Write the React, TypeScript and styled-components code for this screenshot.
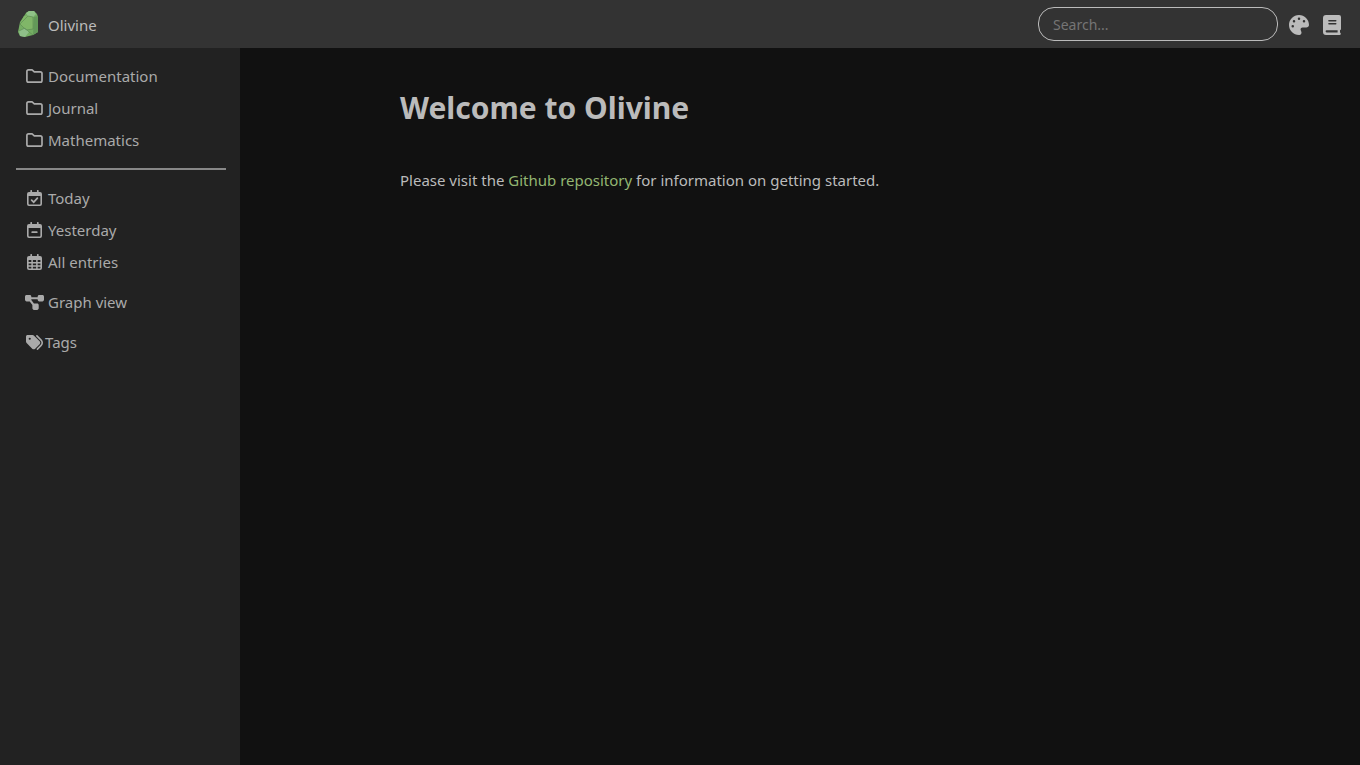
import React from "react";
import styled, { createGlobalStyle } from "styled-components";
import { FaDiagramProject, FaPalette, FaTags } from "react-icons/fa6";

const GlobalStyle = createGlobalStyle`
  *, *::before, *::after { box-sizing: border-box; }
  body {
    margin: 0;
    background: #111111;
    color: #bbbbbb;
    font-family: "Noto Sans", sans-serif;
    font-size: 15px;
    line-height: 24px;
  }
`;

const Page = styled.div`
  display: flex;
  flex-direction: column;
  min-height: 100vh;
`;

const TopBar = styled.header`
  display: flex;
  align-items: center;
  height: 48px;
  padding: 0 16px;
  background: #333333;
`;

const Brand = styled.a`
  display: flex;
  align-items: center;
  gap: 8px;
  margin-right: auto;
  padding-top: 2px;
  color: inherit;
  text-decoration: none;

  svg { margin-bottom: 2px; }
`;

const SearchInput = styled.input`
  width: 240px;
  height: 34px;
  margin-right: 8px;
  padding: 0 14px;
  border: 1px solid #bbbbbb;
  border-radius: 16px;
  background: transparent;
  color: #bbbbbb;
  font: inherit;
  font-size: 14px;

  &::placeholder { color: #757575; opacity: 1; }
`;

const IconButton = styled.button`
  display: flex;
  align-items: center;
  justify-content: center;
  width: 25px;
  height: 32px;
  padding: 2px 0 0;
  border: 0;
  background: none;
  color: #bbbbbb;
  font-size: 20px;
  cursor: pointer;

  & + & { margin-left: 8px; }
`;

const Body = styled.div`
  display: flex;
  flex: 1;
`;

const Sidebar = styled.nav`
  flex: none;
  width: 240px;
  padding: 12px 14px 12px 16px;
  background: #222222;
`;

const LinkList = styled.ul`
  margin: 0;
  padding: 0 0 0 8px;
  list-style: none;

  & + & { margin-top: 8px; }
`;

const SidebarLink = styled.a<{ $gap?: number }>`
  display: flex;
  align-items: center;
  gap: ${({ $gap = 3 }) => $gap}px;
  height: 32px;
  color: #aaaaaa;
  text-decoration: none;
`;

const IconSlot = styled.span`
  display: flex;
  justify-content: center;
  width: 21px;
  font-size: 17px;

  svg { flex: none; }
`;

const Divider = styled.hr`
  height: 2px;
  margin: 12px 0;
  border: 0;
  background: #888888;
`;

const Content = styled.main`
  flex: 1;
  padding: 38px 160px;
`;

const Title = styled.h1`
  margin: 0 0 38px;
  font-size: 30px;
  line-height: 44px;
  font-weight: 700;
`;

const Paragraph = styled.p`
  margin: 0;
`;

const TextLink = styled.a`
  color: #93b672;
  text-decoration: none;
`;

const OlivineLogo = () => (
  <svg width="24" height="28" viewBox="0 0 24 28" aria-hidden="true">
    <path d="M10 3 L13 1 L18 1 L21 4 L22 7 L22 22 L17 25 L9 27 L4 26 L2 22 L4 12 Z" fill="#74ad63" />
    <path d="M18 7 L22 6 L22 22 L17 25 Z" fill="#639959" />
    <path d="M10 3 L13 1 L18 1 L20 4 L17 7 L12 6 Z" fill="#90c287" />
    <path d="M12 6 L17 7 L17 19 L10 20 L4 14 L8 6 Z" fill="#80b668" />
    <path d="M3 21 L9 18 L13 22 L9 27 L4 26 Z" fill="#8fbf89" />
    <path
      d="M12 6 L4 14 L10 20 L17 19 L17 7 Z M9 18 L3 21 M9 18 L13 22 L17 25"
      fill="none"
      stroke="#547f4e"
      strokeWidth="0.5"
    />
  </svg>
);

const BookIcon = () => (
  <svg width="18" height="20" viewBox="0 0 18 20" aria-hidden="true">
    <path
      fillRule="evenodd"
      fill="currentColor"
      d="M3 0 H16 Q18 0 18 2 V14 Q18 15 17 15.3 V17.6 Q17.8 17.8 17.8 18.8 Q17.8 20 16.6 20 H3 Q0 20 0 17 V3 Q0 0 3 0 Z M5.9 5 Q5.2 5 5.2 5.7 Q5.2 6.4 5.9 6.4 H12.8 Q13.5 6.4 13.5 5.7 Q13.5 5 12.8 5 Z M5.9 8 Q5.2 8 5.2 8.7 Q5.2 9.4 5.9 9.4 H12.8 Q13.5 9.4 13.5 8.7 Q13.5 8 12.8 8 Z M3.6 15.2 Q2.6 15.2 2.6 16.3 Q2.6 17.4 3.6 17.4 H14.6 V15.2 Z"
    />
  </svg>
);

const FolderIcon = () => (
  <svg width="17" height="14" viewBox="0 0 17 14" aria-hidden="true">
    <path
      d="M2.5 .9 H6.1 L8.3 2.8 H14.3 Q16 2.8 16 4.5 V11.4 Q16 13.1 14.3 13.1 H2.6 Q.9 13.1 .9 11.4 V2.6 Q.9 .9 2.5 .9 Z"
      fill="none"
      stroke="currentColor"
      strokeWidth="1.7"
      strokeLinejoin="round"
    />
  </svg>
);

const CalendarIcon = ({ mark }: { mark: "check" | "minus" | "grid" }) => (
  <svg width="15" height="16" viewBox="0 0 15 16" aria-hidden="true">
    <path d="M4.2 .8 V3 M10.8 .8 V3" stroke="currentColor" strokeWidth="1.7" strokeLinecap="round" />
    <path
      fillRule="evenodd"
      fill="currentColor"
      d="M2 2 H13 Q15 2 15 4 V14 Q15 16 13 16 H2 Q0 16 0 14 V4 Q0 2 2 2 Z M1.6 6 V13.8 Q1.6 14.4 2.2 14.4 H12.8 Q13.4 14.4 13.4 13.8 V6 Z"
    />
    {mark === "check" && (
      <path d="M4.6 10.2 L6.7 12.2 L10.4 8.2" fill="none" stroke="currentColor" strokeWidth="1.7" strokeLinecap="round" />
    )}
    {mark === "minus" && (
      <path d="M5.2 10.2 H9.8" stroke="currentColor" strokeWidth="1.7" strokeLinecap="round" />
    )}
    {mark === "grid" && (
      <path d="M5.1 6 V15 M9.9 6 V15 M1 8.7 H14 M1 11.9 H14" stroke="currentColor" strokeWidth="1.5" />
    )}
  </svg>
);

const folders = ["Documentation", "Journal", "Mathematics"];

const entries = [
  { label: "Today", mark: "check" },
  { label: "Yesterday", mark: "minus" },
  { label: "All entries", mark: "grid" },
] as const;

export default function App() {
  return (
    <Page>
      <GlobalStyle />
      <TopBar>
        <Brand href="#home">
          <OlivineLogo />
          Olivine
        </Brand>
        <SearchInput type="search" placeholder="Search..." aria-label="Search" />
        <IconButton type="button" aria-label="Change theme">
          <FaPalette />
        </IconButton>
        <IconButton type="button" aria-label="Documentation">
          <BookIcon />
        </IconButton>
      </TopBar>
      <Body>
        <Sidebar aria-label="Notes">
          <LinkList>
            {folders.map((label) => (
              <li key={label}>
                <SidebarLink href="#folder">
                  <IconSlot><FolderIcon /></IconSlot>
                  {label}
                </SidebarLink>
              </li>
            ))}
          </LinkList>
          <Divider />
          <LinkList>
            {entries.map(({ label, mark }) => (
              <li key={label}>
                <SidebarLink href="#entry">
                  <IconSlot><CalendarIcon mark={mark} /></IconSlot>
                  {label}
                </SidebarLink>
              </li>
            ))}
          </LinkList>
          <LinkList>
            <li>
              <SidebarLink href="#graph">
                <IconSlot><FaDiagramProject size={19} /></IconSlot>
                Graph view
              </SidebarLink>
            </li>
          </LinkList>
          <LinkList>
            <li>
              <SidebarLink href="#tags" $gap={0}>
                <IconSlot><FaTags /></IconSlot>
                Tags
              </SidebarLink>
            </li>
          </LinkList>
        </Sidebar>
        <Content>
          <Title>Welcome to Olivine</Title>
          <Paragraph>
            Please visit the <TextLink href="#repository">Github repository</TextLink> for
            information on getting started.
          </Paragraph>
        </Content>
      </Body>
    </Page>
  );
}
